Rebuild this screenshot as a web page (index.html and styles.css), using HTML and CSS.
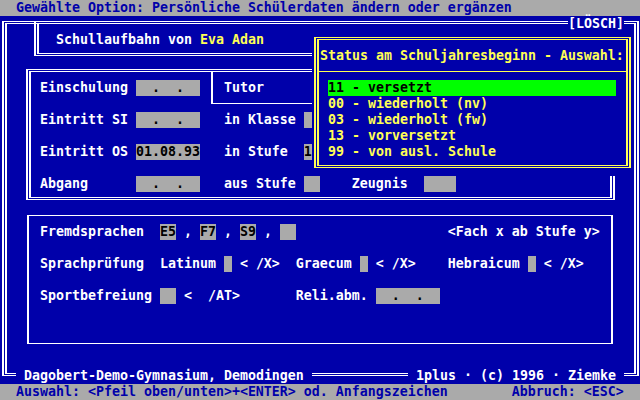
FILE: index.html
```html
<!DOCTYPE html>
<html lang="de">
<head>
<meta charset="utf-8">
<title>1plus – Schullaufbahn</title>
<link rel="stylesheet" href="styles.css">
</head>
<body>
<main class="screen">
  <div class="frame frame-outer"></div>
  <div class="frame frame-header"></div>
  <div class="frame frame-main"></div>
  <div class="box box-tutor"></div>
  <div class="box box-lang"></div>

  <div class="line r0 bar">  Gewählte Option: Persönliche Schülerdaten ändern oder ergänzen</div>
  <div class="cut losch">[LÖSCH]</div>
  <div class="line r2">       Schullaufbahn von <span class="hl">Eva Adan</span></div>
  <div class="line r5">     Einschulung <span class="field">  .  .  </span>   Tutor</div>
  <div class="line r7">     Eintritt SI <span class="field">  .  .  </span>   in Klasse <span class="field">  </span></div>
  <div class="line r9">     Eintritt OS <span class="field">01.08.93</span>   in Stufe  <span class="field">11</span></div>
  <div class="line r11">     Abgang      <span class="field">  .  .  </span>   aus Stufe <span class="field">  </span>    Zeugnis  <span class="field">    </span></div>
  <div class="line r14">     Fremdsprachen  <span class="field">E5</span> , <span class="field">F7</span> , <span class="field">S9</span> , <span class="field">  </span>                   &lt;Fach x ab Stufe y&gt;</div>
  <div class="line r16">     Sprachprüfung  Latinum <span class="field"> </span> &lt; /X&gt;  Graecum <span class="field"> </span> &lt; /X&gt;    Hebraicum <span class="field"> </span> &lt; /X&gt;</div>
  <div class="line r18">     Sportbefreiung <span class="field">  </span> &lt;  /AT&gt;       Reli.abm. <span class="field">  .  .  </span></div>
  <div class="cut footer-school"> Dagobert-Demo-Gymnasium, Demodingen </div>
  <div class="cut footer-copy"> 1plus · (c) 1996 · Ziemke </div>
  <div class="line r24 bar">  Auswahl: &lt;Pfeil oben/unten&gt;+&lt;ENTER&gt; od. Anfangszeichen        Abbruch: &lt;ESC&gt;</div>

  <section class="popup">
    <div class="popup-frame">
      <div class="popup-title">Status am Schuljahresbeginn - Auswahl:</div>
      <div class="popup-sep"></div>
      <ul class="options">
        <li class="selected">11 - versetzt</li>
        <li>00 - wiederholt (nv)</li>
        <li>03 - wiederholt (fw)</li>
        <li>13 - vorversetzt</li>
        <li>99 - von ausl. Schule</li>
      </ul>
    </div>
  </section>
</main>
</body>
</html>
```

FILE: styles.css
```css
* { box-sizing: border-box; }

html, body {
  margin: 0;
  padding: 0;
  background: #0000AA;
}

.screen {
  display: grid;
  grid-template-columns: repeat(80, 8px);
  grid-template-rows: repeat(25, 16px);
  width: 640px;
  height: 400px;
  overflow: hidden;
  background: #0000AA;
  color: #FFFFFF;
  font-family: "DejaVu Sans Mono", "Liberation Mono", monospace;
  font-weight: bold;
  font-size: 13.29px;
  line-height: 16px;
}

/* text rows */
.line { grid-column: 1 / -1; white-space: pre; }
.r0 { grid-row: 1; }
.r2 { grid-row: 3; }
.r5 { grid-row: 6; }
.r7 { grid-row: 8; }
.r9 { grid-row: 10; }
.r11 { grid-row: 12; }
.r14 { grid-row: 15; }
.r16 { grid-row: 17; }
.r18 { grid-row: 19; }
.r24 { grid-row: 25; }

.bar { background: #AAAAAA; color: #0000AA; }
.hl { color: #FFFF55; }

.field {
  display: inline-block;
  height: 16px;
  vertical-align: top;
  background: #AAAAAA;
  color: #000000;
}

/* labels that sit on a frame line */
.cut { white-space: pre; background: #0000AA; color: #FFFFFF; }
.losch { grid-column: 72 / 79; grid-row: 2; }
.footer-school { grid-column: 3 / 40; grid-row: 24; }
.footer-copy { grid-column: 52 / 79; grid-row: 24; }

/* double-line frames */
.frame {
  border: 3px double #FFFFFF;
  border-left-width: 5px;
  border-right-width: 5px;
  margin: 5px 1px 8px 2px;
}
.frame-outer { grid-column: 1 / 81; grid-row: 2 / 25; }
.frame-header { grid-column: 5 / 62; grid-row: 2 / 5; border-right: none; }
.frame-main { grid-column: 4 / 78; grid-row: 5 / 14; }

/* single-line boxes */
.box {
  border: 1px solid #FFFFFF;
  border-left-width: 2px;
  border-right-width: 2px;
  margin: 7px 3px 8px 3px;
}
.box-tutor { grid-column: 27 / 52; grid-row: 5 / 8; border-right: none; }
.box-lang { grid-column: 4 / 78; grid-row: 14 / 23; }

/* selection popup */
.popup {
  grid-column: 40 / 80;
  grid-row: 3 / 12;
  display: flex;
  padding: 5px 1px 8px 2px;
  background: #0000AA;
  color: #FFFF55;
}
.popup-frame {
  flex: 1;
  border: 3px double #FFFF55;
  border-left-width: 5px;
  border-right-width: 5px;
  padding-top: 8px;
}
.popup-title { padding-left: 1px; white-space: pre; }
.popup-sep {
  margin-top: 7px;
  margin-bottom: 8px;
  border-top: 1px solid #FFFF55;
}
.options {
  list-style: none;
  margin: 0;
  padding: 0 0 0 9px;
}
.options li { width: 288px; height: 16px; white-space: pre; }
.options .selected { background: #00FF00; color: #000000; }
```
